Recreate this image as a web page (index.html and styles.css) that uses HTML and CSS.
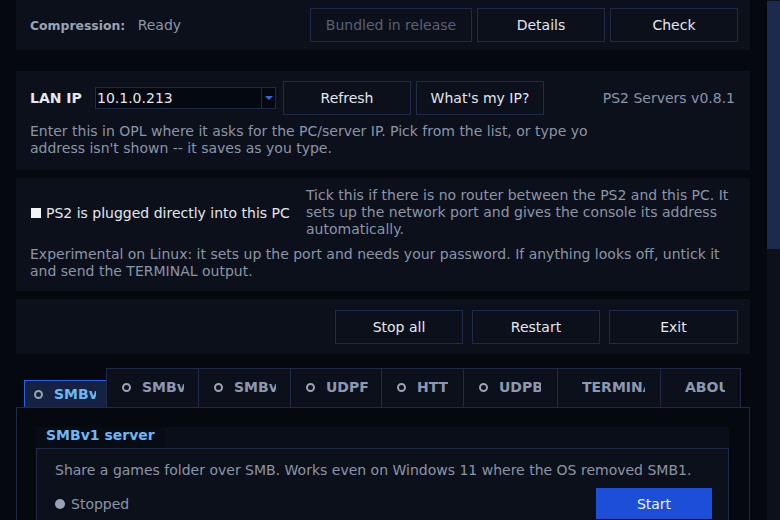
FILE: index.html
```html
<!DOCTYPE html>
<html lang="en">

<head>
    <meta charset="UTF-8" />
    <meta name="viewport" content="width=device-width, initial-scale=1.0" />
    <title>PS2 Servers</title>
    <link rel="stylesheet" href="styles.css">
</head>

<body>
    <div class="app">
        <main class="content">
            <section class="panel panel-compress">
                <div class="status">
                    <span class="status-key">Compression:</span>
                    <span class="status-val">Ready</span>
                </div>
                <div class="btn-row">
                    <button class="btn btn-wide" disabled>Bundled in release</button>
                    <button class="btn">Details</button>
                    <button class="btn">Check</button>
                </div>
            </section>

            <section class="panel panel-lan">
                <div class="lan-row">
                    <span class="lan-label">LAN IP</span>
                    <div class="combo">
                        <span class="combo-value">10.1.0.213</span>
                        <span class="combo-arrow"></span>
                    </div>
                    <button class="btn">Refresh</button>
                    <button class="btn">What's my IP?</button>
                    <span class="version">PS2 Servers v0.8.1</span>
                </div>
                <p class="hint hint-clip">Enter this in OPL where it asks for the PC/server IP. Pick from the list, or type your<br>address isn't shown -- it saves as you type.</p>
            </section>

            <section class="panel panel-direct">
                <div class="direct-row">
                    <label class="check">
                        <span class="check-box"></span>
                        PS2 is plugged directly into this PC
                    </label>
                    <p class="hint direct-help">Tick this if there is no router between the PS2 and this PC. It sets up the network port and gives the console its address automatically.</p>
                </div>
                <p class="hint direct-note">Experimental on Linux: it sets up the port and needs your password. If anything looks off, untick it and send the TERMINAL output.</p>
            </section>

            <section class="panel panel-actions">
                <button class="btn">Stop all</button>
                <button class="btn">Restart</button>
                <button class="btn">Exit</button>
            </section>

            <div class="tabs">
                <div class="tab active" style="width: 83px"><span class="ring"></span><span class="tab-text">SMBv1</span></div>
                <div class="tab" style="width: 93px"><span class="ring"></span><span class="tab-text">SMBv2</span></div>
                <div class="tab" style="width: 93px"><span class="ring"></span><span class="tab-text">SMBv3</span></div>
                <div class="tab" style="width: 92px"><span class="ring"></span><span class="tab-text">UDPFS</span></div>
                <div class="tab" style="width: 83px"><span class="ring"></span><span class="tab-text short">HTTP</span></div>
                <div class="tab" style="width: 95px"><span class="ring"></span><span class="tab-text">UDPBD</span></div>
                <div class="tab plain" style="width: 104px"><span class="tab-text long">TERMINAL</span></div>
                <div class="tab plain" style="width: 81px"><span class="tab-text mid">ABOUT</span></div>
            </div>

            <div class="notebook">
                <div class="group">
                    <div class="group-title">SMBv1 server</div>
                    <div class="group-body">
                        <p class="hint">Share a games folder over SMB. Works even on Windows 11 where the OS removed SMB1.</p>
                        <div class="server-row">
                            <span class="state"><span class="dot"></span>Stopped</span>
                            <button class="btn btn-primary">Start</button>
                        </div>
                    </div>
                </div>
            </div>
        </main>
        <div class="scrollbar">
            <div class="thumb"></div>
        </div>
    </div>
</body>

</html>
```

FILE: styles.css
```css
body {
    margin: 0;
    width: 780px;
    height: 520px;
    overflow: hidden;
    background-color: #05080f;
    color: #e4e7ee;
    font-family: "DejaVu Sans", Verdana, sans-serif;
    font-size: 14px;
}

.app {
    display: flex;
    height: 520px;
}

.content {
    width: 734px;
    padding-left: 16px;
    padding-right: 16px;
}

.panel {
    background-color: #0b101b;
    box-sizing: border-box;
}

.btn {
    height: 34px;
    width: 128px;
    padding: 0;
    background-color: #0b101b;
    border: 1px solid #1e2a48;
    color: #e4e7ee;
    font-family: inherit;
    font-size: 14px;
}

.btn:disabled {
    color: #586176;
}

.btn-wide {
    width: 162px;
}

.hint {
    margin: 0;
    color: #8b95a8;
    line-height: 17px;
}

/* top strip */
.panel-compress {
    height: 50px;
    display: flex;
    align-items: center;
    justify-content: space-between;
    padding: 0 12px 0 14px;
}

.status-key {
    color: #9aa3b6;
    font-weight: bold;
    font-size: 12.4px;
    margin-right: 8px;
}

.status-val {
    color: #8b95a8;
}

.btn-row {
    display: flex;
    gap: 5px;
}

/* lan ip */
.panel-lan {
    margin-top: 21px;
    height: 99px;
    padding: 10px 14px 0 14px;
}

.lan-row {
    display: flex;
    align-items: center;
    gap: 5px;
}

.lan-label {
    font-weight: bold;
    width: 60px;
}

.combo {
    display: flex;
    width: 181px;
    height: 22px;
    box-sizing: border-box;
    border: 1px solid #1e2a48;
    background-color: #05080f;
    margin-right: 2px;
}

.combo-value {
    flex: 1;
    line-height: 20px;
    padding-left: 1px;
}

.combo-arrow {
    width: 13px;
    border-left: 1px solid #1e2a48;
    position: relative;
}

.combo-arrow::after {
    content: "";
    position: absolute;
    left: 3px;
    top: 8px;
    border-left: 4px solid transparent;
    border-right: 4px solid transparent;
    border-top: 4px solid #2f6ae6;
}

.version {
    margin-left: auto;
    color: #8b95a8;
    padding-right: 1px;
}

.hint-clip {
    width: 558px;
    margin-top: 8px;
    white-space: nowrap;
    overflow: hidden;
}

/* direct cable */
.panel-direct {
    margin-top: 8px;
    height: 113px;
    padding: 9px 14px 0 14px;
}

.direct-row {
    display: flex;
    align-items: center;
}

.check {
    display: flex;
    align-items: center;
    gap: 5px;
    width: 275px;
    flex: none;
    padding-left: 1px;
}

.check-box {
    width: 10px;
    height: 10px;
    background-color: #f3f4f6;
}

.direct-help {
    width: 430px;
}

.direct-note {
    margin-top: 8px;
    width: 706px;
}

/* actions */
.panel-actions {
    margin-top: 8px;
    height: 55px;
    display: flex;
    justify-content: flex-end;
    align-items: center;
    gap: 9px;
    padding-right: 12px;
}

.panel-actions .btn:last-child {
    width: 129px;
}

/* tabs */
.tabs {
    display: flex;
    align-items: flex-end;
    margin-top: 14px;
    padding-left: 8px;
    height: 39px;
}

.tab {
    height: 39px;
    box-sizing: border-box;
    display: flex;
    align-items: center;
    padding-left: 15px;
    padding-bottom: 2px;
    background-color: #0b101b;
    border: 1px solid #1e2a48;
    border-bottom: none;
    margin-left: -1px;
    color: #8d98b0;
    font-weight: bold;
    flex: none;
}

.tab.active {
    height: 27px;
    margin-left: 0;
    padding-left: 9px;
    padding-bottom: 0;
    background-color: #162241;
    border-color: #2563eb;
    color: #6cb8f6;
}

.tab.plain {
    padding-left: 24px;
}

.ring {
    width: 5px;
    height: 5px;
    border: 2px solid #9aa3b6;
    border-radius: 50%;
    margin-right: 11px;
    flex: none;
}

.tab-text {
    width: 42px;
    overflow: hidden;
    white-space: nowrap;
}

.tab-text.short {
    width: 31px;
}

.tab-text.long {
    width: 63px;
}

.tab-text.mid {
    width: 40px;
}

/* notebook page */
.notebook {
    border: 1px solid #1e2a48;
    border-bottom: none;
    height: 120px;
    padding: 19px 20px 0 19px;
}

.group {
    background-color: #0a0e19;
}

.group-title {
    display: inline-block;
    background-color: #070b13;
    color: #6cb8f6;
    font-weight: bold;
    padding: 0 10px 4px 10px;
    line-height: 17px;
}

.group-body {
    border: 1px solid #1e2a48;
    border-bottom: none;
    background-color: #0b101b;
    padding: 13px 16px 0 18px;
    height: 80px;
}

.server-row {
    display: flex;
    justify-content: space-between;
    align-items: center;
    margin-top: 9px;
}

.state {
    display: flex;
    align-items: center;
    gap: 6px;
    color: #8b95a8;
}

.dot {
    width: 10px;
    height: 10px;
    border-radius: 50%;
    background-color: #9aa3b6;
}

.btn-primary {
    width: 116px;
    height: 31px;
    border: none;
    background-color: #1d4ed8;
    color: #eef2ff;
}

/* scrollbar */
.scrollbar {
    margin-left: auto;
    width: 13px;
    background-color: #0b101b;
    padding-top: 1px;
}

.thumb {
    height: 248px;
    background-color: #1c2a4e;
}
```
